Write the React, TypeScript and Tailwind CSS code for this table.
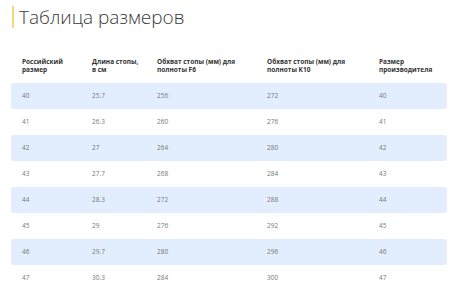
import React from "react";

const rows = [
  ["40", "25.7", "256", "272", "40"],
  ["41", "26.3", "260", "276", "41"],
  ["42", "27", "264", "280", "42"],
  ["43", "27.7", "268", "284", "43"],
  ["44", "28.3", "272", "288", "44"],
  ["45", "29", "276", "292", "45"],
  ["46", "29.7", "280", "296", "46"],
  ["47", "30.3", "284", "300", "47"],
];

const cols = ["w-[70px]", "w-[65px]", "w-[110px]", "w-[112px]", "w-[79px]"];

export default function App() {
  return (
    <div className="w-[450px] h-[295px] overflow-hidden bg-white" style={{ fontFamily: '"Open Sans", sans-serif' }}>
      <div className="pt-[6px] pl-[12px] flex items-stretch">
        <div className="w-[2px] h-[22px] bg-[#f6d77c]" />
        <div className="pl-[5px] text-[19px] leading-[22px] font-light text-[#3a3a3a]">Таблица размеров</div>
      </div>
      <div className="ml-[11px] w-[436px] mt-[30px]">
        <div className="flex text-[6.5px] leading-[8px] font-bold text-[#333] h-[25px]">
          <div className={`${cols[0]} pl-[11px]`}>Российский<br />размер</div>
          <div className={`${cols[1]} pl-[11px]`}>Длина стопы,<br />в см</div>
          <div className={`${cols[2]} pl-[11px]`}>Обхват стопы (мм) для<br />полноты F6</div>
          <div className={`${cols[3]} pl-[11px]`}>Обхват стопы (мм) для<br />полноты K10</div>
          <div className={`${cols[4]} pl-[11px]`}>Размер<br />производителя</div>
        </div>
        {rows.map((r, i) => (
          <div
            key={i}
            className={`flex items-center h-[26px] text-[6.5px] text-[#777] rounded-[2px] ${i % 2 === 0 ? "bg-[#e2eefd]" : "bg-white"}`}
          >
            {r.map((c, j) => (
              <div key={j} className={`${cols[j]} pl-[11px]`}>{c}</div>
            ))}
          </div>
        ))}
      </div>
    </div>
  );
}
